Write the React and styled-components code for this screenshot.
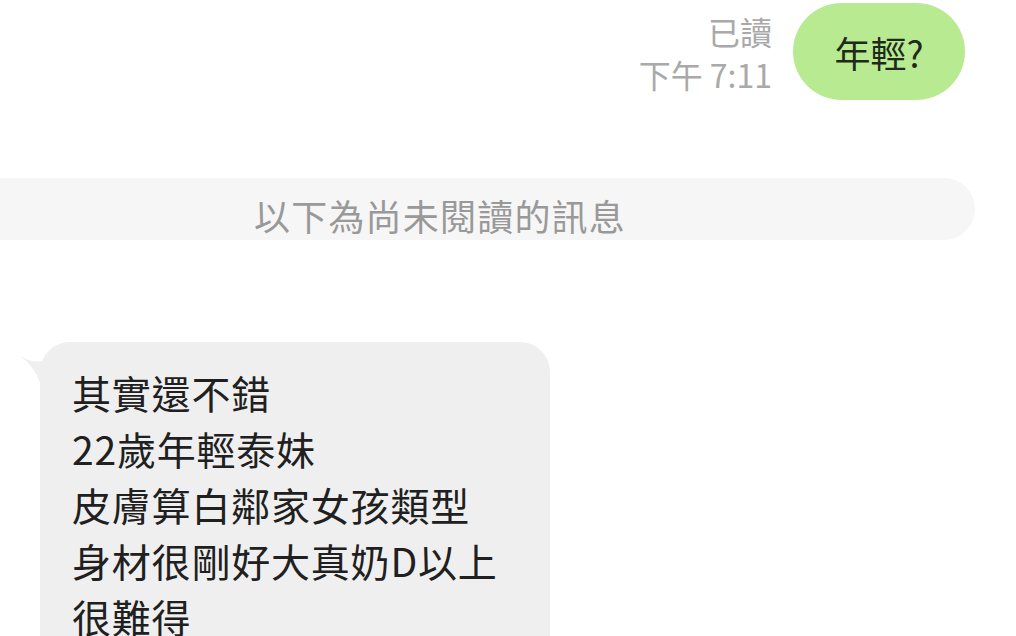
import React from "react";
import styled, { createGlobalStyle } from "styled-components";

const Global = createGlobalStyle`
  html, body { margin: 0; padding: 0; background: #ffffff; }
  body { font-family: "Noto Sans CJK TC", "Noto Sans", sans-serif; overflow: hidden; }
`;

const Page = styled.div`
  width: 1016px;
  height: 636px;
  overflow: hidden;
  display: flex;
  flex-direction: column;
  background: #ffffff;
  & > * { flex-shrink: 0; }
`;

const SentRow = styled.div`
  display: flex;
  justify-content: flex-end;
  align-items: center;
  gap: 21px;
  padding: 3px 51px 0 0;
`;

const Status = styled.div`
  display: flex;
  flex-direction: column;
  align-items: flex-end;
  color: #a9a9a9;
  font-size: 32px;
  line-height: 43px;
  margin-top: 2px;
`;

const SentBubble = styled.div`
  height: 97px;
  width: 172px;
  box-sizing: border-box;
  border-radius: 49px;
  background: #b8ea91;
  color: #1f2a1b;
  font-size: 36px;
  display: flex;
  align-items: center;
  justify-content: center;
`;

const Divider = styled.div`
  margin: 78px 41px 0 -95px;
  height: 62px;
  box-sizing: border-box;
  padding-top: 12px;
  border-radius: 31px;
  background: #f6f6f6;
  color: #999999;
  font-size: 36px;
  letter-spacing: 1.2px;
  display: flex;
  align-items: center;
  justify-content: center;
`;

const ReceivedRow = styled.div`
  margin-top: 102px;
  padding-left: 40px;
  display: flex;
`;

const ReceivedBubble = styled.div`
  position: relative;
  width: 510px;
  box-sizing: border-box;
  padding: 22px 20px 40px 32px;
  background: #efefef;
  border-radius: 30px;
  color: #202020;
  font-size: 39px;
  line-height: 56px;
  letter-spacing: 0.8px;
`;

const Tail = styled.svg`
  position: absolute;
  left: -25px;
  top: 0;
  width: 45px;
  height: 50px;
  overflow: visible;
`;

const Line = styled.div`
  white-space: nowrap;
`;

export default function App() {
  const lines = [
    "其實還不錯",
    "22歲年輕泰妹",
    "皮膚算白鄰家女孩類型",
    "身材很剛好大真奶D以上",
    "很難得",
  ];
  return (
    <Page>
      <Global />
      <SentRow>
        <Status>
          <span>已讀</span>
          <span>下午 7:11</span>
        </Status>
        <SentBubble>年輕?</SentBubble>
      </SentRow>
      <Divider>以下為尚未閱讀的訊息</Divider>
      <ReceivedRow>
        <ReceivedBubble>
          <Tail viewBox="0 0 45 50">
            <path
              d="M0 10 Q14 22 28 19 L45 10 L45 50 L27 50 Q24 26 0 10 Z"
              fill="#efefef"
            />
          </Tail>
          {lines.map((l) => (
            <Line key={l}>{l}</Line>
          ))}
        </ReceivedBubble>
      </ReceivedRow>
    </Page>
  );
}
